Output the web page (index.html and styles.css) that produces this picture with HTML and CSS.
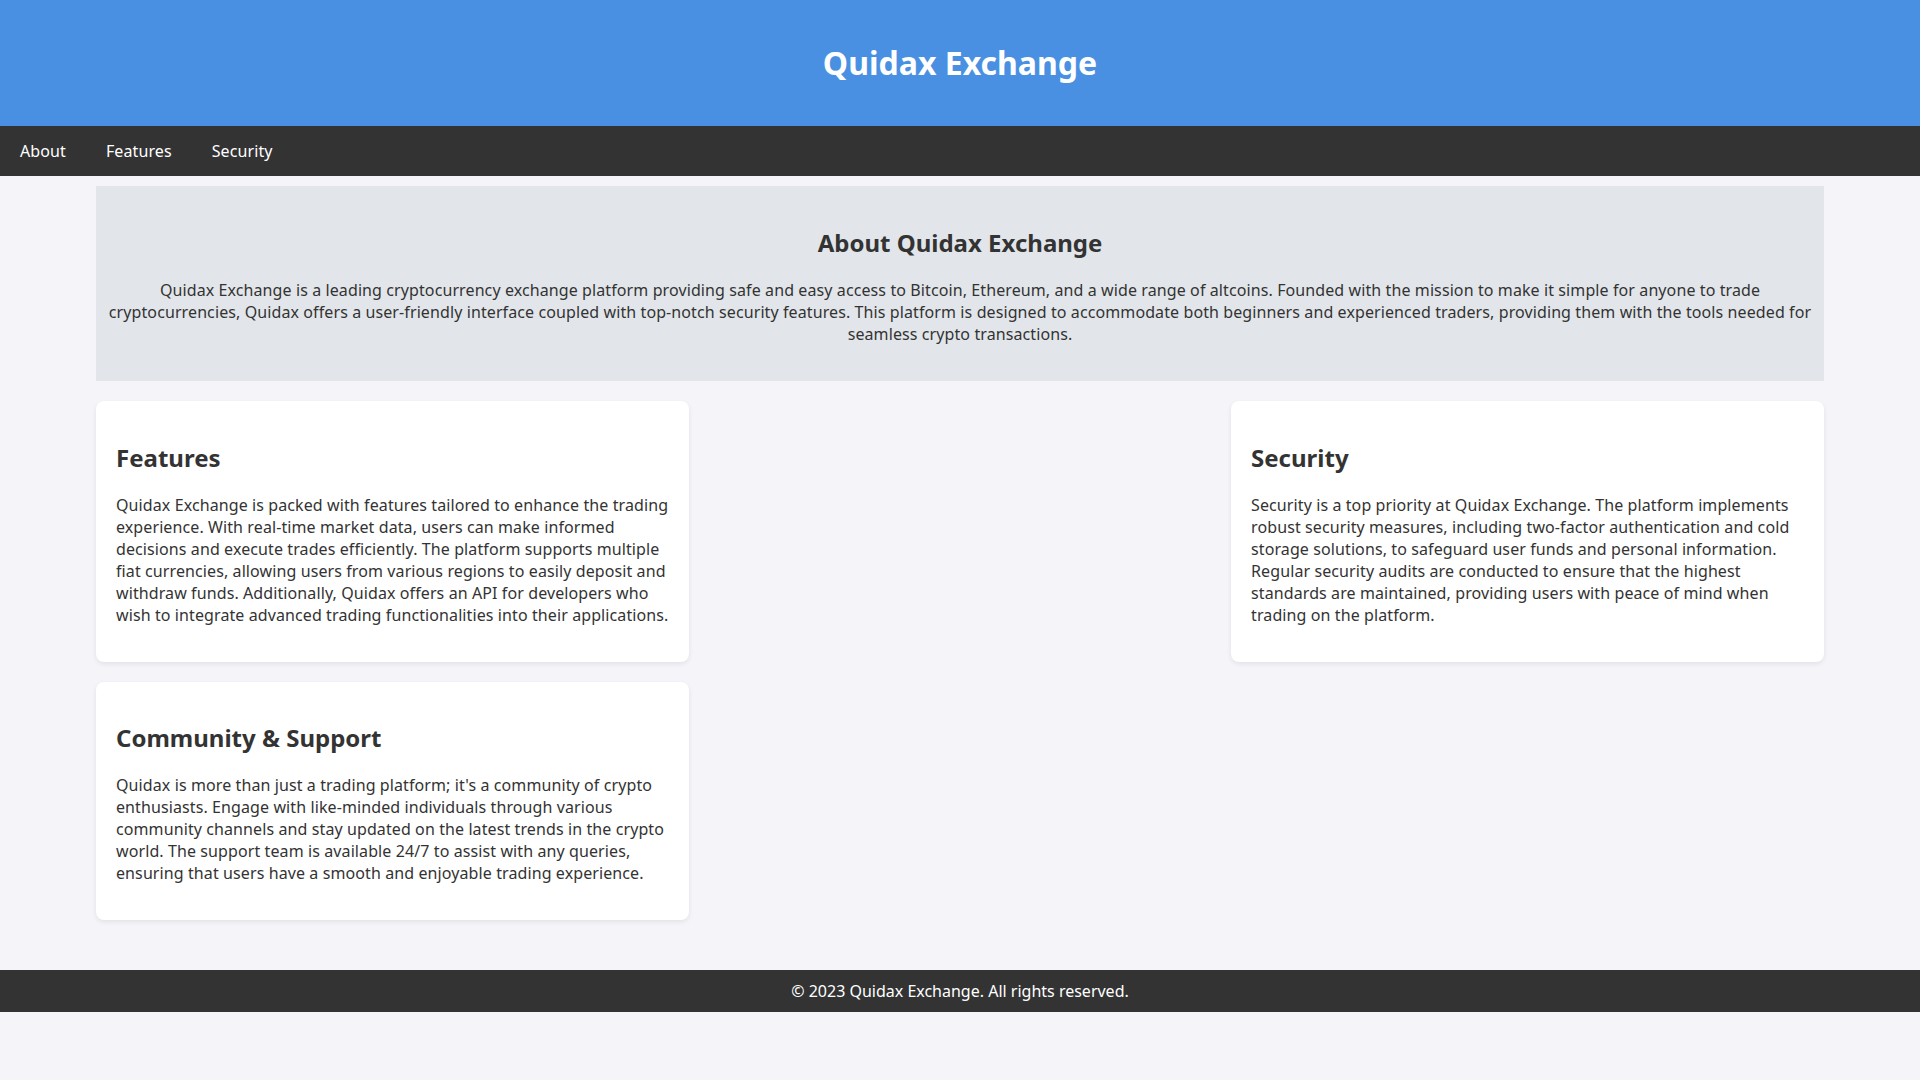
FILE: index.html
```html
<!DOCTYPE html>
<html lang="en">
<head>
  <meta charset="UTF-8">
  <meta name="viewport" content="width=device-width, initial-scale=1.0">
  <title>Quidax Exchange</title>
  <link rel="stylesheet" href="styles.css">
</head>
<body>
  <header>
    <h1>Quidax Exchange</h1>
  </header>

  <nav>
    <a href="#about">About</a>
    <a href="#features">Features</a>
    <a href="#security">Security</a>
  </nav>

  <main class="container">
    <section id="about" class="about">
      <h2>About Quidax Exchange</h2>
      <p>Quidax Exchange is a leading cryptocurrency exchange platform providing safe and easy access to Bitcoin, Ethereum, and a wide range of altcoins. Founded with the mission to make it simple for anyone to trade cryptocurrencies, Quidax offers a user-friendly interface coupled with top-notch security features. This platform is designed to accommodate both beginners and experienced traders, providing them with the tools needed for seamless crypto transactions.</p>
    </section>

    <section id="features" class="card">
      <h2>Features</h2>
      <p>Quidax Exchange is packed with features tailored to enhance the trading experience. With real-time market data, users can make informed decisions and execute trades efficiently. The platform supports multiple fiat currencies, allowing users from various regions to easily deposit and withdraw funds. Additionally, Quidax offers an API for developers who wish to integrate advanced trading functionalities into their applications.</p>
    </section>

    <section id="security" class="card">
      <h2>Security</h2>
      <p>Security is a top priority at Quidax Exchange. The platform implements robust security measures, including two-factor authentication and cold storage solutions, to safeguard user funds and personal information. Regular security audits are conducted to ensure that the highest standards are maintained, providing users with peace of mind when trading on the platform.</p>
    </section>

    <section id="community" class="card">
      <h2>Community &amp; Support</h2>
      <p>Quidax is more than just a trading platform; it's a community of crypto enthusiasts. Engage with like-minded individuals through various community channels and stay updated on the latest trends in the crypto world. The support team is available 24/7 to assist with any queries, ensuring that users have a smooth and enjoyable trading experience.</p>
    </section>
  </main>

  <footer>
    <p>&copy; 2023 Quidax Exchange. All rights reserved.</p>
  </footer>
</body>
</html>
```

FILE: styles.css
```css
body {
  margin: 0;
  font-family: "Noto Sans", "Open Sans", sans-serif;
  background-color: #f4f4f9;
  color: #333;
}

header {
  background-color: #4a90e2;
  color: #fff;
  text-align: center;
  padding: 20px 0;
}

header h1 {
  margin: 0.67em 0;
  font-size: 2em;
}

nav {
  display: flex;
  background-color: #333;
}

nav a {
  color: #fff;
  text-decoration: none;
  padding: 14px 20px;
  letter-spacing: 0.1px;
}

nav a:hover {
  background-color: #444;
}

.container {
  width: 90%;
  margin: 0 auto;
  padding: 10px 0;
  display: flex;
  flex-wrap: wrap;
  justify-content: space-between;
}

.container p {
  letter-spacing: 0.1px;
}

.about {
  width: 100%;
  box-sizing: border-box;
  background-color: #e2e6ea;
  text-align: center;
  padding: 20px 10px;
  margin-bottom: 20px;
}

.card {
  width: 32%;
  background-color: #fff;
  padding: 20px;
  margin-bottom: 20px;
  border-radius: 8px;
  box-shadow: 0 2px 5px rgba(0, 0, 0, 0.08);
}

h2 {
  font-size: 1.5em;
  margin: 0.83em 0;
}

footer {
  background-color: #333;
  color: #fff;
  text-align: center;
  padding: 10px 0;
  margin-top: 20px;
}

footer p {
  margin: 0;
}
```
